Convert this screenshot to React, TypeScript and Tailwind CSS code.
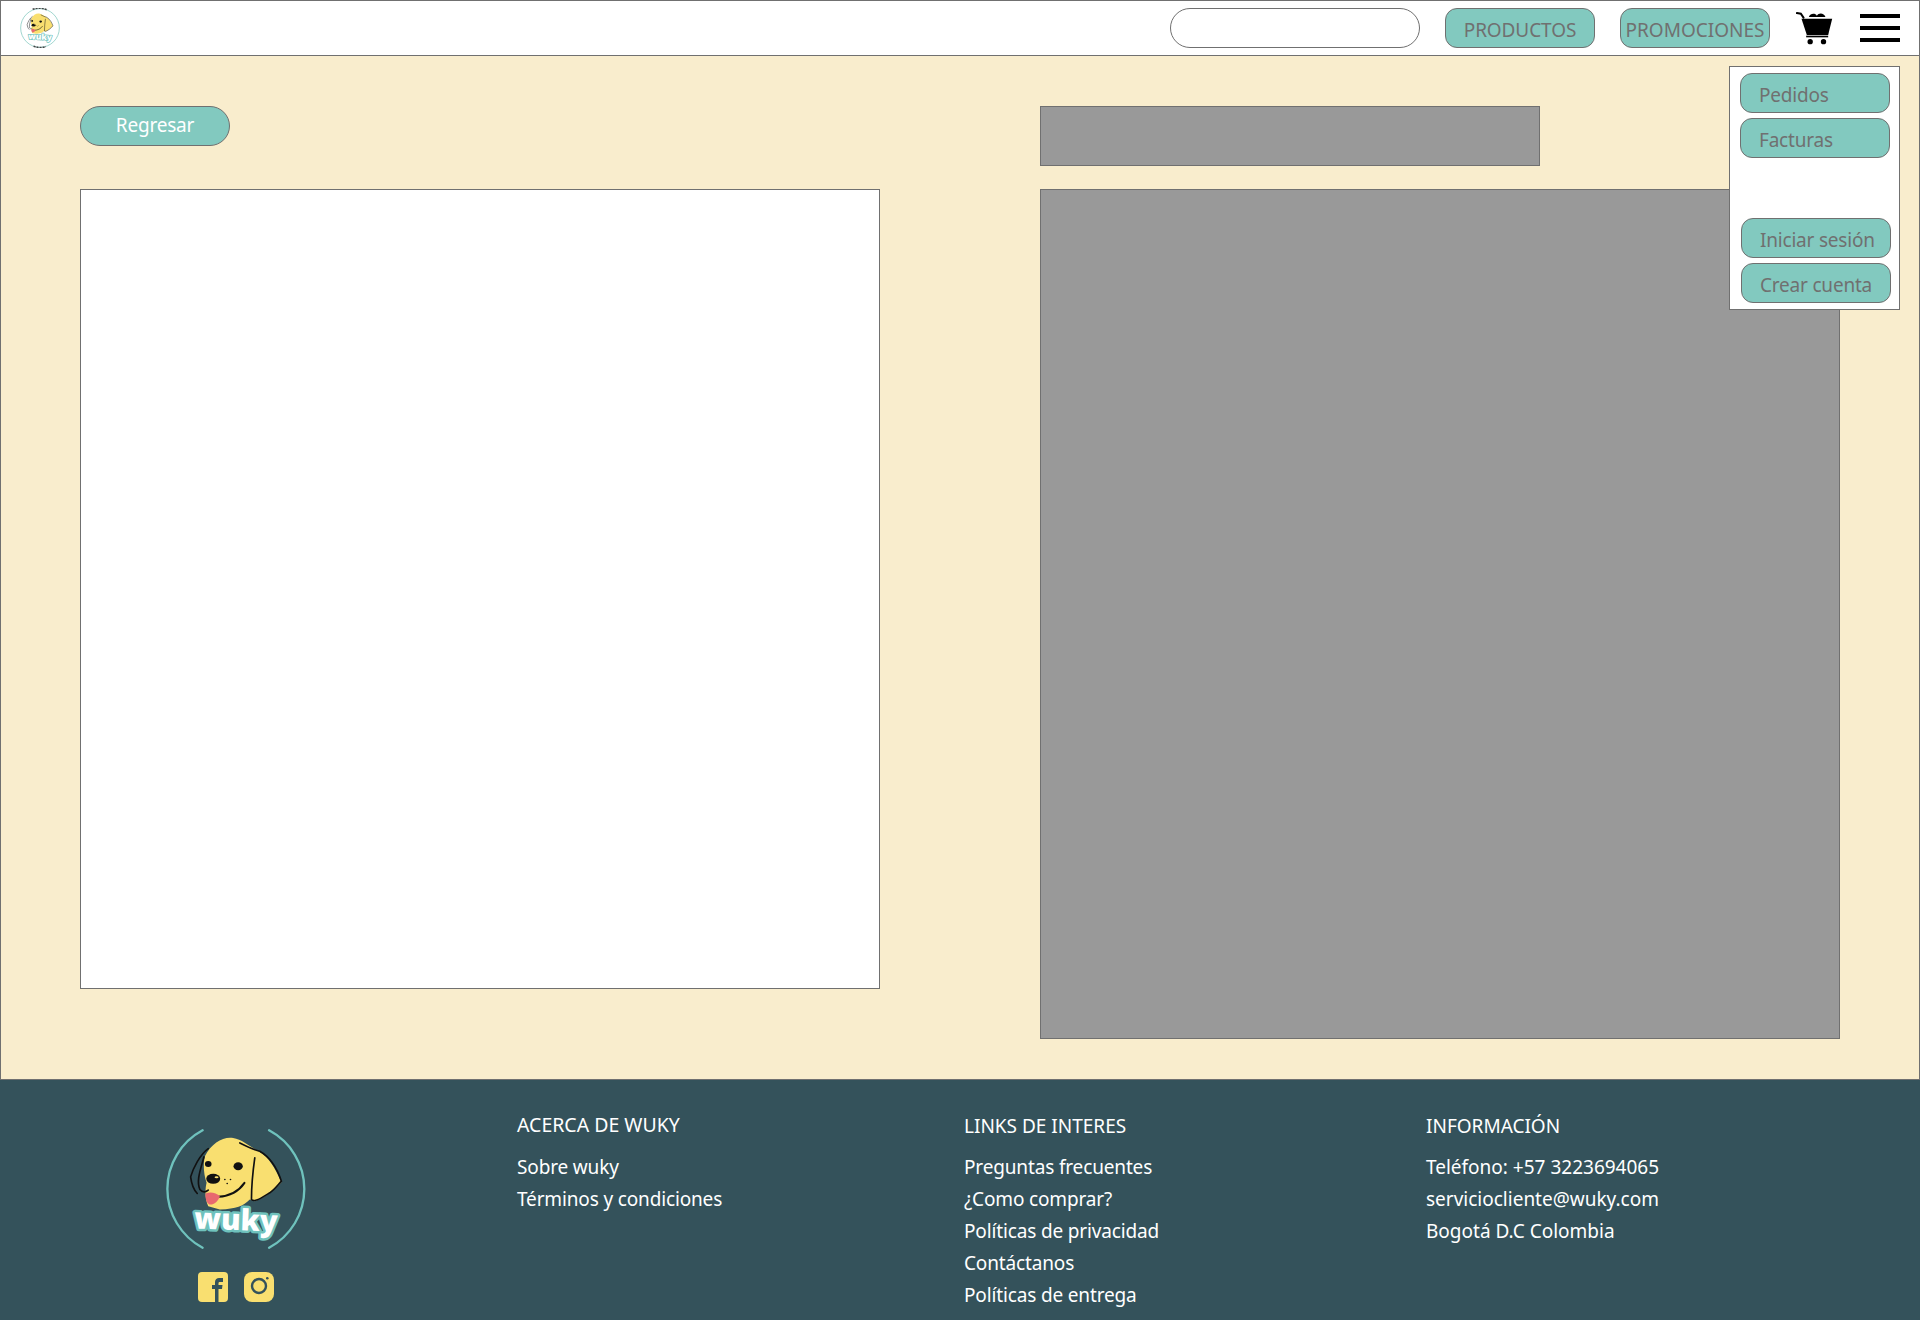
const btn = "flex h-10 w-[150px] items-center rounded-[12px] border border-[#707070] bg-[#82c9bf] pt-[4px] text-[19px] text-[#707070]";

function Dog() {
  return (
    <g>
      <path d="M195 170C215 130 250 110 280 115C310 120 335 145 365 160C395 180 415 225 425 248C405 270 375 295 345 305L330 300C310 320 290 328 240 330L205 320C195 300 195 270 200 250C190 220 190 190 195 170Z" fill="#f9df70" />
      <path d="M205 147C180 165 160 205 152 232C155 255 160 270 172 282" fill="none" stroke="#111" strokeWidth="5" strokeLinecap="round" />
      <path d="M192 172C182 210 168 245 180 270C188 280 198 278 205 272" fill="none" stroke="#111" strokeWidth="5" strokeLinecap="round" />
      <path d="M345 175C340 210 335 260 335 300C345 310 365 295 390 280C405 270 415 255 425 245C415 215 395 175 360 155C340 150 320 140 300 130" fill="none" stroke="#111" strokeWidth="5" strokeLinecap="round" />
      <ellipse cx="205" cy="193" rx="10" ry="9" fill="#111" />
      <ellipse cx="295" cy="200" rx="14" ry="12" fill="#111" />
      <ellipse cx="220" cy="238" rx="21" ry="15" fill="#111" />
      <ellipse cx="230" cy="233" rx="6" ry="3" fill="#f9df70" />
      <circle cx="255" cy="240" r="2.5" fill="#111" />
      <circle cx="272" cy="240" r="2.5" fill="#111" />
      <circle cx="262" cy="252" r="2.5" fill="#111" />
      <path d="M235 292C265 290 295 278 314 250" fill="none" stroke="#111" strokeWidth="6" strokeLinecap="round" />
      <path d="M197 282C210 275 230 280 240 290C235 305 220 318 208 315C198 308 196 295 197 282Z" fill="#e8696f" />
      <text x="288" y="392" textAnchor="middle" fontFamily="'Open Sans', sans-serif" fontWeight="800" fontSize="88" fill="#fff" stroke="#6fc2bd" strokeWidth="15" strokeLinejoin="round" paintOrder="stroke" transform="rotate(2 288 380)">wuky</text>
    </g>
  );
}

function Cart() {
  return (
    <svg viewBox="50 30 110 102" className="ml-[26px] h-[34px] w-[37px]">
      <path d="M52 36L64 38L72 50" fill="none" stroke="#000" strokeWidth="6" strokeLinecap="round" />
      <path d="M66 53H158L146 102H82Z" fill="#000" />
      <path d="M88 48C92 36 108 36 112 44C118 34 134 36 138 48Z" fill="#000" />
      <rect x="80" y="104" width="66" height="5" fill="#000" />
      <circle cx="92" cy="122" r="8" fill="#000" />
      <circle cx="132" cy="122" r="8" fill="#000" />
    </svg>
  );
}

export default function App() {
  return (
    <div className="flex h-[1320px] w-[1920px] flex-col font-['Noto_Sans',sans-serif]">
      <header className="flex h-14 items-center justify-end border border-[#707070] bg-white pr-[19px]">
        <svg viewBox="76 56 424 424" className="mr-auto ml-[19px] h-10 w-10">
          <circle cx="288" cy="268" r="205" fill="none" stroke="#82c9bf" strokeWidth="8" />
          <path d="M210 70A205 205 0 0 1 360 75M220 462A205 205 0 0 0 350 465" fill="none" stroke="#444" strokeWidth="16" strokeDasharray="22 10" />
          <Dog />
        </svg>
        <div className="h-10 w-[250px] rounded-full border border-[#707070] bg-white" />
        <button className={`${btn} ml-[25px] justify-center tracking-[-0.1px]`}>PRODUCTOS</button>
        <button className={`${btn} ml-[25px] justify-center`}>PROMOCIONES</button>
        <Cart />
        <div className="ml-[27px] flex w-10 flex-col gap-2">
          <div className="h-1 bg-black" />
          <div className="h-1 bg-black" />
          <div className="h-1 bg-black" />
        </div>
      </header>

      <main className="relative flex h-[1024px] gap-40 border-x border-b border-[#707070] bg-[#f9edcd] pt-[50px] pl-[79px]">
        <div className="w-[800px]">
          <button className="h-10 w-[150px] rounded-full border border-[#707070] bg-[#82c9bf] pb-[2px] text-[19px] tracking-[-0.2px] text-white">Regresar</button>
          <div className="mt-[43px] h-[800px] border border-[#707070] bg-white" />
        </div>
        <div className="w-[800px]">
          <div className="h-[60px] w-[500px] border border-[#707070] bg-[#999999]" />
          <div className="mt-[23px] h-[850px] border border-[#707070] bg-[#999999]" />
        </div>

        <div className="absolute top-[10px] right-[19px] flex h-[244px] w-[171px] flex-col border border-[#707070] bg-white pt-[6px] pl-[10px] tracking-[-0.2px]">
          <button className={`${btn} pl-[18px]`}>Pedidos</button>
          <button className={`${btn} mt-[5px] pl-[18px]`}>Facturas</button>
          <button className={`${btn} mt-[60px] ml-px pl-[18px]`}>Iniciar sesión</button>
          <button className={`${btn} mt-[5px] ml-px pl-[18px]`}>Crear cuenta</button>
        </div>
      </main>

      <footer className="flex flex-1 bg-[#34525b] pt-[29px] text-[19px] leading-8 text-white">
        <div className="flex w-[517px] flex-col items-start pl-[160px]">
          <svg viewBox="60 70 460 400" className="mt-[14px] h-[133px] w-[153px]">
            <path d="M188 92A200 200 0 0 0 188 445M388 92A200 200 0 0 1 388 445" fill="none" stroke="#6fc2bd" strokeWidth="7" strokeLinecap="round" />
            <Dog />
          </svg>
          <div className="mt-[16px] ml-[38px] flex gap-4">
            <svg viewBox="0 0 30 30" className="h-[30px] w-[30px]">
              <rect width="30" height="30" rx="4" fill="#f9df70" />
              <path d="M17 30V17H14V13H17V10C17 7.5 19 6 21 6H25V10H22C21 10 20.5 10.5 20.5 11V13H24.5L24 17H20.5V30Z" fill="#34525b" />
            </svg>
            <svg viewBox="0 0 30 30" className="h-[30px] w-[30px]">
              <rect width="30" height="30" rx="8" fill="#f9df70" />
              <circle cx="15" cy="14" r="7" fill="none" stroke="#34525b" strokeWidth="2.4" />
              <circle cx="23.3" cy="6.3" r="1.3" fill="#34525b" />
            </svg>
          </div>
        </div>
        <div className="w-[447px]">
          <h3 className="text-[19.5px]">ACERCA DE WUKY</h3>
          <ul className="mt-[10px] tracking-[-0.15px]">
            <li>Sobre wuky</li>
            <li>Términos y condiciones</li>
          </ul>
        </div>
        <div className="w-[462px]">
          <h3 className="pt-px">LINKS DE INTERES</h3>
          <ul className="mt-[9px] tracking-[-0.15px]">
            <li>Preguntas frecuentes</li>
            <li>¿Como comprar?</li>
            <li>Políticas de privacidad</li>
            <li>Contáctanos</li>
            <li>Políticas de entrega</li>
          </ul>
        </div>
        <div>
          <h3 className="pt-px">INFORMACIÓN</h3>
          <ul className="mt-[9px]">
            <li>Teléfono: +57 3223694065</li>
            <li>serviciocliente@wuky.com</li>
            <li>Bogotá D.C Colombia</li>
          </ul>
        </div>
      </footer>
    </div>
  );
}
